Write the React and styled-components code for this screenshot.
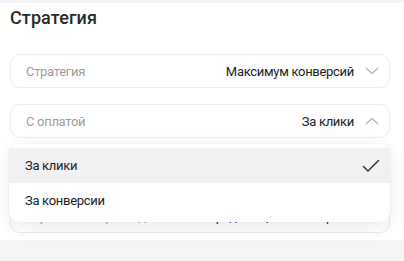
import React from "react";
import styled, { createGlobalStyle } from "styled-components";

const Global = createGlobalStyle`
  html, body {
    margin: 0;
    padding: 0;
    background: #f4f4f6;
    font-family: Roboto, "Noto Sans", Arial, sans-serif;
    -webkit-font-smoothing: antialiased;
  }
`;

const Page = styled.div`
  width: 404px;
  height: 261px;
  padding-top: 3px;
  box-sizing: border-box;
  overflow: hidden;
`;

const Panel = styled.section`
  background: #fff;
  height: 237px;
  box-sizing: border-box;
  padding: 3px 14px 0 10px;
  display: flex;
  flex-direction: column;
`;

const Title = styled.h2`
  margin: 0;
  font-size: 18px;
  line-height: 24px;
  font-weight: 500;
  color: #2a2a2a;
  letter-spacing: 0.1px;
`;

const Wrap = styled.div`
  position: relative;
  margin-top: ${(p) => p.$top}px;
  z-index: ${(p) => (p.$open ? 2 : 1)};
`;

const Field = styled.div`
  height: 34px;
  box-sizing: border-box;
  border: 1px solid #ececee;
  border-radius: 10px;
  background: #fff;
  display: flex;
  align-items: center;
  padding: 0 10px 0 15px;
  font-size: 13px;
  letter-spacing: -0.3px;
`;

const Label = styled.span`
  color: #9c9c9c;
  flex: 1;
`;

const Value = styled.span`
  color: #222;
  margin-right: 11px;
`;

const Chevron = ({ up }) => (
  <svg width="14" height="8" viewBox="0 0 14 8" fill="none">
    <path
      d={up ? "M1 7L7 1.5L13 7" : "M1 1L7 6.5L13 1"}
      stroke="#b8b8bc"
      strokeWidth="1.3"
      strokeLinecap="round"
      strokeLinejoin="round"
    />
  </svg>
);

const Menu = styled.div`
  position: absolute;
  left: -1px;
  right: 0;
  top: calc(100% + 6px);
  background: #fff;
  border-radius: 10px;
  padding: 4px 0;
  box-shadow: 0 4px 20px rgba(0, 0, 0, 0.09), 0 0 2px rgba(0, 0, 0, 0.05);
`;

const Option = styled.div`
  height: 35px;
  display: flex;
  align-items: center;
  justify-content: space-between;
  padding: 0 10px 0 16px;
  font-size: 13px;
  letter-spacing: -0.3px;
  color: #222;
  background: ${(p) => (p.$active ? "#f1f1f4" : "transparent")};
`;

const Check = () => (
  <svg width="18" height="14" viewBox="0 0 18 14" fill="none">
    <path
      d="M1.5 7.5L6 12L16.5 1.5"
      stroke="#333"
      strokeWidth="1.5"
      strokeLinecap="round"
      strokeLinejoin="round"
    />
  </svg>
);

export default function App() {
  return (
    <Page>
      <Global />
      <Panel>
        <Title>Стратегия</Title>
        <Wrap $top={24}>
          <Field>
            <Label>Стратегия</Label>
            <Value>Максимум конверсий</Value>
            <Chevron />
          </Field>
        </Wrap>
        <Wrap $top={16} $open>
          <Field>
            <Label>С оплатой</Label>
            <Value>За клики</Value>
            <Chevron up />
          </Field>
          <Menu>
            <Option $active>
              За клики
              <Check />
            </Option>
            <Option>За конверсии</Option>
          </Menu>
        </Wrap>
        <Wrap $top={61}>
          <Field>
            <Label>Ограничение расхода</Label>
            <Value>Средняя цена конверсии</Value>
            <Chevron />
          </Field>
        </Wrap>
      </Panel>
    </Page>
  );
}
